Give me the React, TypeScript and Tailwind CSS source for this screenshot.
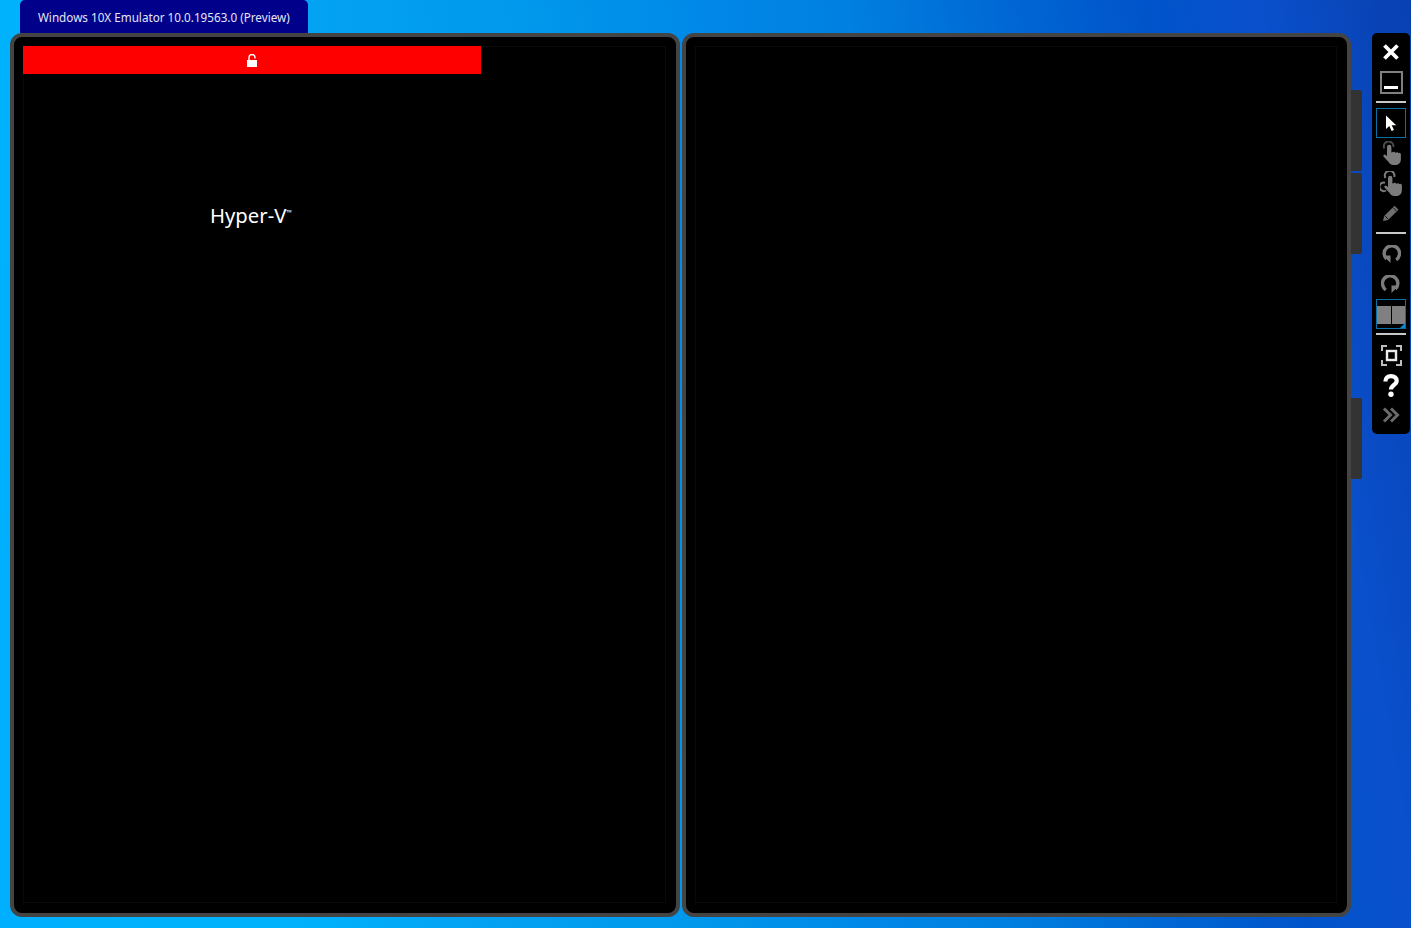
import type { ReactNode } from "react";

function Separator() {
  return <div className="mx-auto my-[1px] h-[2px] w-[30px] bg-[#c8c8c8]" />;
}

function ToolButton({ children, selected }: { children: ReactNode; selected?: boolean }) {
  return (
    <div
      className={
        "relative mx-auto flex h-[30px] w-[30px] items-center justify-center " +
        (selected ? "border border-[#0a6ea8]" : "")
      }
    >
      {children}
    </div>
  );
}

const handPath =
  "M6 6a2.200 2.200 0 0 1 4.400 0V11.500l1-.2a1.700 1.700 0 0 1 2.900.4l.4 0a1.600 1.600 0 0 1 2.700.5a1.500 1.500 0 0 1 2.500 1V18c0 3.500-2 6-5.500 6h-2c-2.600 0-4-1.200-5-3.200L2.500 15.500c-.7-1.500 1.200-2.700 2.400-1.400L6 15.300Z";

function TouchIcon() {
  return (
    <svg width="20" height="24" viewBox="0 0 20 24">
      <path d="M3.400 7.500a4.800 4.800 0 1 1 9-1.500" fill="none" stroke="#4a4a4a" strokeWidth="2" />
      <path d={handPath} fill="#7c7c7c" />
    </svg>
  );
}

function PinchIcon() {
  return (
    <svg width="22" height="25" viewBox="0 0 22 25">
      <path d="M5.500 7a4.800 4.800 0 1 1 8.700-1" fill="none" stroke="#7c7c7c" strokeWidth="2" />
      <path d="M6 19.500a4.300 4.300 0 1 1-1-7.800" fill="none" stroke="#7c7c7c" strokeWidth="2" />
      <path transform="translate(2 1)" d={handPath} fill="#7c7c7c" />
    </svg>
  );
}

function RotateIcon({ flip }: { flip?: boolean }) {
  return (
    <svg width="20" height="18" viewBox="0 0 20 18" className={flip ? "-scale-x-100" : ""}>
      <path d="M4.800 14.800A7.700 7.700 0 1 1 14.500 14" fill="none" stroke="#7c7c7c" strokeWidth="3.400" />
      <path d="M10.500 18v-7.500h7.500Z" fill="#7c7c7c" />
    </svg>
  );
}

function Toolbar() {
  return (
    <div className="mt-[33px] flex h-[401px] w-[38px] flex-col rounded-[5px] bg-black pt-1">
      <ToolButton>
        <svg width="18" height="18" viewBox="0 0 18 18">
          <path d="M2.500 2.500l13 13M15.500 2.500l-13 13" stroke="#fff" strokeWidth="3.800" />
        </svg>
      </ToolButton>
      <ToolButton>
        <div className="flex h-[23px] w-[23px] items-end justify-center border-2 border-[#808080] pb-[3px]">
          <div className="h-[3px] w-[14px] bg-white" />
        </div>
      </ToolButton>
      <div className="h-[3px]" />
      <Separator />
      <div className="h-[4px]" />
      <ToolButton selected>
        <svg width="12" height="16" viewBox="0 0 12 16">
          <path d="M1 0.500V14l3.300-3 2.300 5 2.400-1-2.300-4.800h4.500Z" fill="#fff" />
        </svg>
      </ToolButton>
      <ToolButton>
        <TouchIcon />
      </ToolButton>
      <ToolButton>
        <PinchIcon />
      </ToolButton>
      <ToolButton>
        <svg width="18" height="18" viewBox="0 0 18 18">
          <path d="M1 17l1.200-5L12.500 1.800l4 4L6 16Z" fill="#6f6f6f" />
          <path d="M2.800 11.800l3.400 3.400M11 3.500l3.600 3.600" stroke="#000" strokeWidth="0.800" />
        </svg>
      </ToolButton>
      <div className="h-[3px]" />
      <Separator />
      <div className="h-[4px]" />
      <ToolButton>
        <RotateIcon flip />
      </ToolButton>
      <ToolButton>
        <RotateIcon />
      </ToolButton>
      <ToolButton selected>
        <div className="flex h-full w-full items-end gap-[1px] pb-[4px]">
          <div className="h-[18px] flex-1 bg-[#808080]" />
          <div className="h-[18px] flex-1 bg-[#808080]" />
        </div>
        <div className="absolute bottom-0 right-0 h-0 w-0 border-b-[5px] border-l-[5px] border-b-[#0a86d0] border-l-transparent" />
      </ToolButton>
      <div className="h-[3px]" />
      <Separator />
      <div className="h-[4px]" />
      <ToolButton>
        <svg width="21" height="21" viewBox="0 0 21 21" fill="none" stroke="#bdbdbd" strokeWidth="2">
          <path d="M1 6V1h5M15 1h5v5M20 15v5h-5M6 20H1v-5" />
          <rect x="6" y="6" width="9" height="9" stroke="#ececec" strokeWidth="2.400" />
        </svg>
      </ToolButton>
      <ToolButton>
        <svg width="16" height="23" viewBox="0 0 16 23" fill="none">
          <path d="M2.400 7.500C2.400 3.800 4.500 2.200 8 2.200s5.700 1.800 5.700 4.600c0 4.500-5.700 4-5.700 8.700" stroke="#fff" strokeWidth="4.200" />
          <circle cx="8" cy="20.300" r="2.700" fill="#fff" />
        </svg>
      </ToolButton>
      <ToolButton>
        <svg width="18" height="16" viewBox="0 0 18 16" fill="none" stroke="#6a6a6a" strokeWidth="3">
          <path d="M2 1.500L8.500 8 2 14.500M9 1.500L15.500 8 9 14.500" />
        </svg>
      </ToolButton>
    </div>
  );
}

function Screen({ width, children }: { width: string; children?: ReactNode }) {
  return (
    <div className={"h-[884px] rounded-[12px] border-4 border-[#444444] bg-black pt-[9px] pr-[10px] pb-[10px] pl-[9px] " + width}>
      <div className="h-full w-full outline outline-offset-[-1px] outline-[#0a0a0a]">{children}</div>
    </div>
  );
}

export default function App() {
  return (
    <div className="flex h-[928px] w-[1411px] flex-col overflow-hidden bg-[linear-gradient(80deg,#00b0ff_0%,#00b2fb_19%,#04a2f2_30%,#0098ec_44%,#0088e8_55%,#0080e0_64%,#0068d4_74%,#0054ca_83%,#0a50cc_90%,#0840b0_100%)] font-['Noto_Sans','Open_Sans',sans-serif]">
      <div className="ml-[20px] flex h-[33px] w-[288px] shrink-0 items-center rounded-t-[5px] bg-[#00008b] pt-[3px] pl-[18px] text-[11.700px] text-[#e6e6f5]">
        Windows 10X Emulator 10.0.19563.0 (Preview)
      </div>
      <div className="-mt-[33px] flex">
        <div className="ml-[10px] mt-[33px] flex gap-[2px]">
          <Screen width="w-[670px]">
            {/* relative keeps the bar above the panel's outline */}
            <div className="relative flex h-[28px] w-[458px] items-center justify-center bg-[#ff0000]">
              <svg width="10" height="13" viewBox="0 0 10 13">
                <path d="M2 6V3.500a3 3 0 0 1 6 0V4.500" fill="none" stroke="#fff" strokeWidth="1.400" />
                <rect x="0" y="6" width="10" height="7" fill="#fff" />
              </svg>
            </div>
            <div className="mt-[127px] pl-[187px] text-[20.300px] leading-[28px] font-normal text-white">
              Hyper-V
              <span className="relative -top-[8px] text-[7px]">™</span>
            </div>
          </Screen>
          <Screen width="w-[669px]" />
        </div>
        <div className="flex w-[11px] flex-col pt-[90px]">
          <div className="h-[81px] rounded-r-[2px] bg-[#333333]" />
          <div className="mt-[2px] h-[81px] rounded-r-[2px] bg-[#333333]" />
          <div className="mt-[144px] h-[81px] rounded-r-[2px] bg-[#333333]" />
        </div>
        <div className="ml-[10px]">
          <Toolbar />
        </div>
      </div>
    </div>
  );
}
